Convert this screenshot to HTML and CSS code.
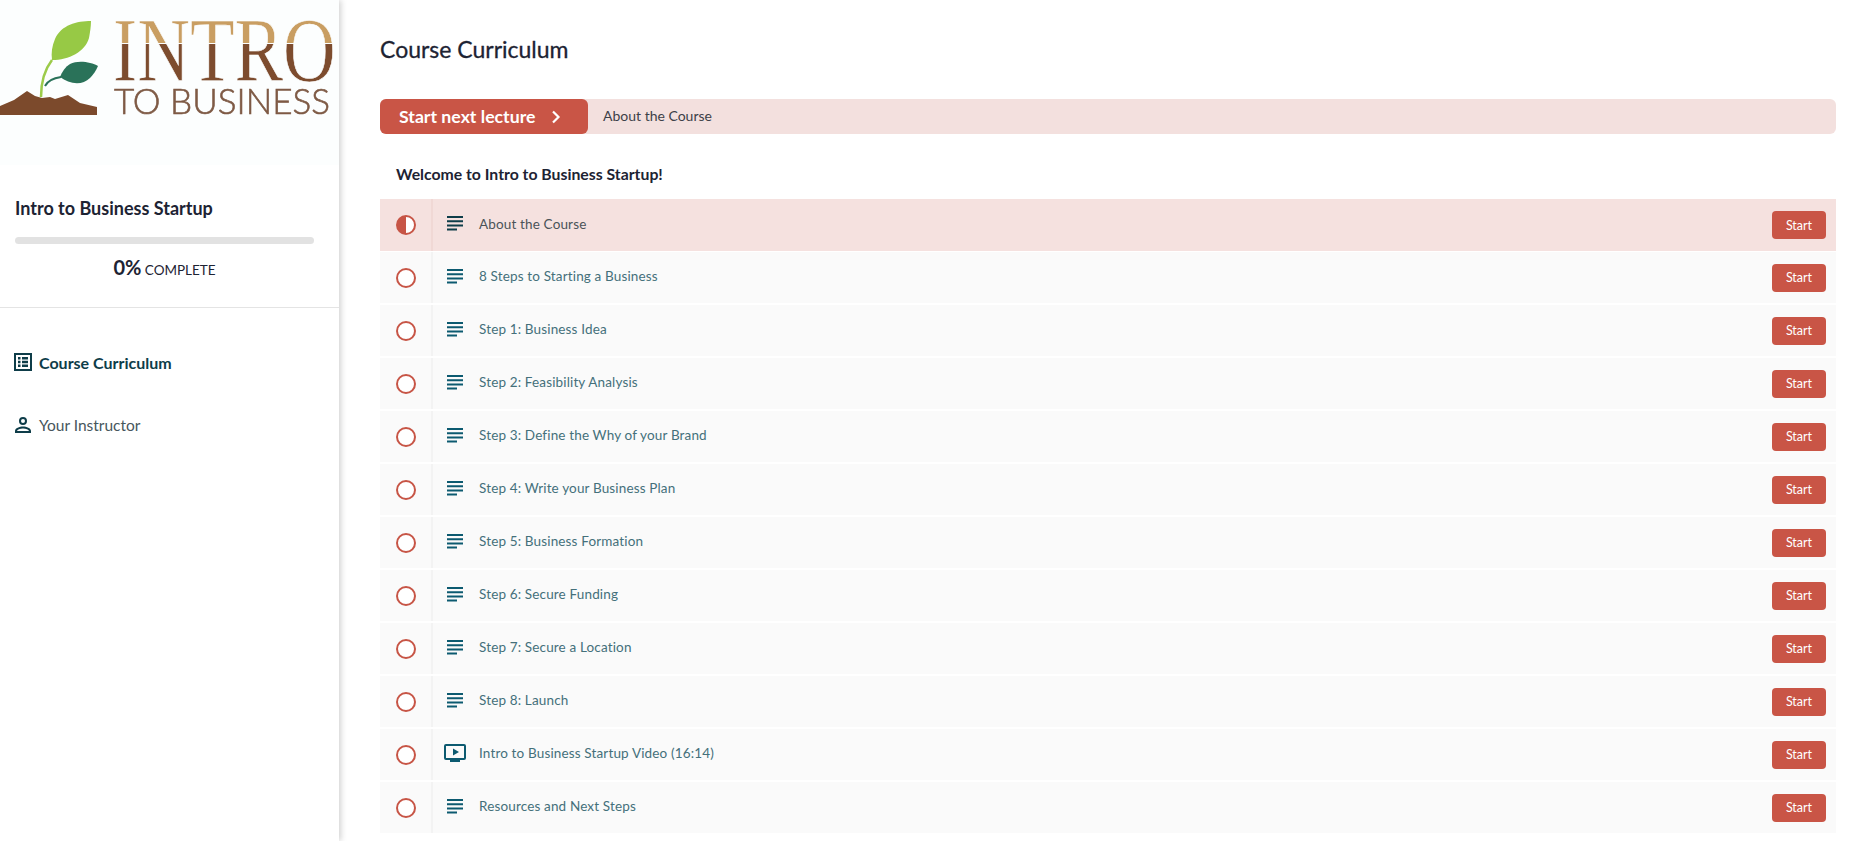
FILE: index.html
```html
<!DOCTYPE html>
<html lang="en">

<head>
    <meta charset="UTF-8">
    <meta name="viewport" content="width=device-width, initial-scale=1.0">
    <title>Course Curriculum</title>
    <link rel="stylesheet" href="styles.css">
</head>

<body>

    <svg class="icon-defs" width="0" height="0">
        <symbol id="i-text" viewBox="0 0 16 15">
            <path d="M0 0h16v2H0zM0 4.200h16v2H0zM0 8.400h16v2H0zM0 12.600h10v2H0z" />
        </symbol>
        <symbol id="i-video" viewBox="0 0 22 18">
            <path fill-rule="evenodd"
                d="M2 0h18a2 2 0 0 1 2 2v12a2 2 0 0 1-2 2h-4v2H6v-2H2a2 2 0 0 1-2-2V2a2 2 0 0 1 2-2zm0 2v12h18V2zm7 2.500L15 8l-6 3.500z" />
        </symbol>
    </svg>

    <aside class="sidebar">
        <div class="logo">
            <svg width="339" height="165" viewBox="0 0 339 165">
                <defs>
                    <linearGradient id="intro-fill" gradientUnits="userSpaceOnUse" x1="0" y1="-60" x2="0" y2="0">
                        <stop offset="0.36" stop-color="#c99e62" />
                        <stop offset="0.36" stop-color="#fcfefe" />
                        <stop offset="0.385" stop-color="#fcfefe" />
                        <stop offset="0.385" stop-color="#7d4c2e" />
                    </linearGradient>
                </defs>
                <path fill="#7c4a2c"
                    d="M0 106l14-6 13-9 8 5 7 2 8-1 5 2 13-4 12 8 17 4v8H0z" />
                <path fill="none" stroke="#9ccb4a" stroke-width="2.500" d="M41 97c0-14 4-28 11-37" />
                <path fill="#97c945" d="M91 21c-14 0-30 4-36 18-3 7-4 14-3 21 17 0 33-8 37-22 1-6 2-11 2-17z" />
                <path fill="none" stroke="#2a7259" stroke-width="2" d="M45 86c3-6 9-8 16-9" />
                <path fill="#2a7259" d="M98 66c-7-4-20-6-28-2-5 3-8 8-10 13 9 7 22 9 30 1 3-3 6-7 8-12z" />
                <text class="logo-intro" transform="translate(113 81) scale(0.81 1)"
                    fill="url(#intro-fill)">INTRO</text>
                <text class="logo-business" x="114" y="114" textLength="216"
                    lengthAdjust="spacingAndGlyphs">TO BUSINESS</text>
            </svg>
        </div>

        <div class="course-info">
            <h2 class="course-name">Intro to Business Startup</h2>
            <div class="progress"></div>
            <div class="percent"><b>0%</b> COMPLETE</div>
        </div>

        <nav class="side-nav">
            <a class="nav-item active">
                <svg width="18" height="18" viewBox="0 0 18 18">
                    <path fill-rule="evenodd"
                        d="M0 0h18v18H0zm2 2v14h14V2zm2 2h2.500v2.500H4zm4 0h6v2.500H8zM4 7.800h2.500v2.500H4zm4 0h6v2.500H8zM4 11.500h2.500V14H4zm4 0h6V14H8z" />
                </svg>
                Course Curriculum
            </a>
            <a class="nav-item">
                <svg width="18" height="18" viewBox="0 0 18 18">
                    <path fill-rule="evenodd"
                        d="M9 1a4 4 0 1 1 0 8 4 4 0 0 1 0-8zm0 2a2 2 0 1 0 0 4 2 2 0 0 0 0-4zM9 10.500c3.500 0 8 1.700 8 4.500v2H1v-2c0-2.800 4.500-4.500 8-4.500zm0 2c-3 0-5.700 1.300-6 2.500h12c-.3-1.200-3-2.500-6-2.500z" />
                </svg>
                Your Instructor
            </a>
        </nav>
    </aside>

    <main class="content">
        <h1 class="page-title">Course Curriculum</h1>

        <div class="next-bar">
            <button class="next-btn">Start next lecture
                <svg width="10" height="14" viewBox="0 0 10 14">
                    <path d="M2 1.500L7.500 7 2 12.500" fill="none" stroke="#fff" stroke-width="2.200" />
                </svg>
            </button>
            <span class="next-name">About the Course</span>
        </div>

        <h3 class="section-title">Welcome to Intro to Business Startup!</h3>

        <ul class="lectures">
            <li class="lecture current">
                <span class="status">
                    <svg width="20" height="20" viewBox="0 0 20 20">
                        <circle cx="10" cy="10" r="9" fill="#fff" stroke="#c75546" stroke-width="2" />
                        <path d="M10 1a9 9 0 0 0 0 18z" fill="#c75546" />
                    </svg>
                </span>
                <span class="lecture-icon"><svg class="i-text"><use href="#i-text" /></svg></span>
                <span class="lecture-name">About the Course</span>
                <button class="start-btn">Start</button>
            </li>
            <li class="lecture">
                <span class="status"><span class="ring"></span></span>
                <span class="lecture-icon"><svg class="i-text"><use href="#i-text" /></svg></span>
                <span class="lecture-name">8 Steps to Starting a Business</span>
                <button class="start-btn">Start</button>
            </li>
            <li class="lecture">
                <span class="status"><span class="ring"></span></span>
                <span class="lecture-icon"><svg class="i-text"><use href="#i-text" /></svg></span>
                <span class="lecture-name">Step 1: Business Idea</span>
                <button class="start-btn">Start</button>
            </li>
            <li class="lecture">
                <span class="status"><span class="ring"></span></span>
                <span class="lecture-icon"><svg class="i-text"><use href="#i-text" /></svg></span>
                <span class="lecture-name">Step 2: Feasibility Analysis</span>
                <button class="start-btn">Start</button>
            </li>
            <li class="lecture">
                <span class="status"><span class="ring"></span></span>
                <span class="lecture-icon"><svg class="i-text"><use href="#i-text" /></svg></span>
                <span class="lecture-name">Step 3: Define the Why of your Brand</span>
                <button class="start-btn">Start</button>
            </li>
            <li class="lecture">
                <span class="status"><span class="ring"></span></span>
                <span class="lecture-icon"><svg class="i-text"><use href="#i-text" /></svg></span>
                <span class="lecture-name">Step 4: Write your Business Plan</span>
                <button class="start-btn">Start</button>
            </li>
            <li class="lecture">
                <span class="status"><span class="ring"></span></span>
                <span class="lecture-icon"><svg class="i-text"><use href="#i-text" /></svg></span>
                <span class="lecture-name">Step 5: Business Formation</span>
                <button class="start-btn">Start</button>
            </li>
            <li class="lecture">
                <span class="status"><span class="ring"></span></span>
                <span class="lecture-icon"><svg class="i-text"><use href="#i-text" /></svg></span>
                <span class="lecture-name">Step 6: Secure Funding</span>
                <button class="start-btn">Start</button>
            </li>
            <li class="lecture">
                <span class="status"><span class="ring"></span></span>
                <span class="lecture-icon"><svg class="i-text"><use href="#i-text" /></svg></span>
                <span class="lecture-name">Step 7: Secure a Location</span>
                <button class="start-btn">Start</button>
            </li>
            <li class="lecture">
                <span class="status"><span class="ring"></span></span>
                <span class="lecture-icon"><svg class="i-text"><use href="#i-text" /></svg></span>
                <span class="lecture-name">Step 8: Launch</span>
                <button class="start-btn">Start</button>
            </li>
            <li class="lecture">
                <span class="status"><span class="ring"></span></span>
                <span class="lecture-icon"><svg class="i-video"><use href="#i-video" /></svg></span>
                <span class="lecture-name">Intro to Business Startup Video (16:14)</span>
                <button class="start-btn">Start</button>
            </li>
            <li class="lecture">
                <span class="status"><span class="ring"></span></span>
                <span class="lecture-icon"><svg class="i-text"><use href="#i-text" /></svg></span>
                <span class="lecture-name">Resources and Next Steps</span>
                <button class="start-btn">Start</button>
            </li>
        </ul>
    </main>

</body>

</html>
```

FILE: styles.css
```css
* {
    box-sizing: border-box;
}

body {
    margin: 0;
    height: 841px;
    overflow: hidden;
    display: flex;
    font-family: Lato, "Open Sans", sans-serif;
    color: #1d2333;
    background-color: #fff;
}

.icon-defs {
    position: absolute;
}


/* sidebar */
.sidebar {
    width: 339px;
    flex-shrink: 0;
    background-color: #fff;
    box-shadow: 2px 0 6px rgba(0, 0, 0, 0.18);
}

.logo {
    height: 165px;
    background-color: #fcfefe;
}

.logo svg {
    display: block;
    filter: blur(0.4px);
}

.logo-intro {
    font-family: "Liberation Serif", serif;
    font-size: 90px;
    stroke: #fcfefe;
    stroke-width: 0.7px;
}

.logo-business {
    font-family: Lato, sans-serif;
    font-size: 35px;
    font-weight: 300;
    fill: #7e5a45;
    stroke: #7e5a45;
    stroke-width: 0.6px;
}

.course-info {
    height: 143px;
    padding: 33px 25px 0 15px;
    border-bottom: 1px solid #e4e4e4;
}

.course-name {
    margin: 0;
    font-size: 18px;
    line-height: 20px;
    font-weight: 700;
}

.progress {
    height: 7px;
    margin-top: 19px;
    border-radius: 4px;
    background-color: #e2e2e2;
}

.percent {
    margin-top: 10px;
    text-align: center;
    font-size: 13.500px;
    line-height: 26px;
}

.percent b {
    font-size: 20px;
}

.side-nav {
    padding-top: 41px;
}

.nav-item {
    height: 26px;
    margin-bottom: 37px;
    padding-left: 14px;
    display: flex;
    align-items: center;
    gap: 7px;
    font-size: 15.500px;
    color: #47565c;
}

.nav-item svg {
    fill: #0e3d49;
}

.nav-item.active {
    font-size: 16px;
    font-weight: 700;
    color: #0e3d49;
}


/* main column */
.content {
    flex: 1;
    padding: 0 30px 0 41px;
}

.page-title {
    margin: 0;
    padding-top: 36px;
    font-size: 23px;
    line-height: 27px;
    font-weight: 400;
    -webkit-text-stroke: 0.3px #1d2333;
}

.next-bar {
    height: 35px;
    margin-top: 36px;
    display: flex;
    align-items: center;
    border-radius: 6px;
    background-color: #f3e0de;
}

.next-btn {
    width: 208px;
    height: 35px;
    padding: 0 0 0 19px;
    display: flex;
    align-items: center;
    gap: 16px;
    border: 0;
    border-radius: 6px;
    font-family: inherit;
    font-size: 17.700px;
    font-weight: 700;
    white-space: nowrap;
    color: #fff;
    background-color: #c95546;
}

.next-name {
    margin: -2px 0 0 15px;
    font-size: 14px;
    color: #3d4048;
}

.section-title {
    margin: 0;
    padding: 30px 0 0 16px;
    font-size: 15.800px;
    line-height: 19px;
    font-weight: 700;
}

.lectures {
    margin: 16px 0 0;
    padding: 0;
    list-style: none;
}

.lecture {
    height: 51px;
    margin-bottom: 2px;
    display: flex;
    align-items: center;
    background-color: #fafafa;
}

.status {
    width: 53px;
    height: 100%;
    display: flex;
    align-items: center;
    justify-content: center;
    border-right: 2px solid #f3f3f3;
}

.ring {
    width: 20px;
    height: 20px;
    border: 2px solid #c75546;
    border-radius: 50%;
    background-color: #fff;
}

.lecture-icon {
    width: 44px;
    display: flex;
    justify-content: center;
    fill: #0c5a70;
    margin-top: -3px;
}

.i-text {
    width: 16px;
    height: 15px;
    display: block;
}

.i-video {
    width: 22px;
    height: 18px;
    display: block;
}

.lecture-name {
    flex: 1;
    margin: -3px 0 0 2px;
    font-size: 13.500px;
    letter-spacing: 0.15px;
    color: #44707a;
}

.start-btn {
    width: 54px;
    height: 28px;
    margin-right: 10px;
    padding: 0;
    border: 0;
    border-radius: 4px;
    font-family: inherit;
    font-size: 12.500px;
    color: #fff;
    background-color: #c95546;
}

.lecture.current {
    height: 52px;
    margin-bottom: 1px;
    background-color: #f5e1df;
}

.lecture.current .status {
    border-right-color: #f0d8d5;
}

.lecture.current .lecture-icon {
    fill: #0e3d49;
}

.lecture.current .lecture-name {
    color: #4a5358;
}
```
